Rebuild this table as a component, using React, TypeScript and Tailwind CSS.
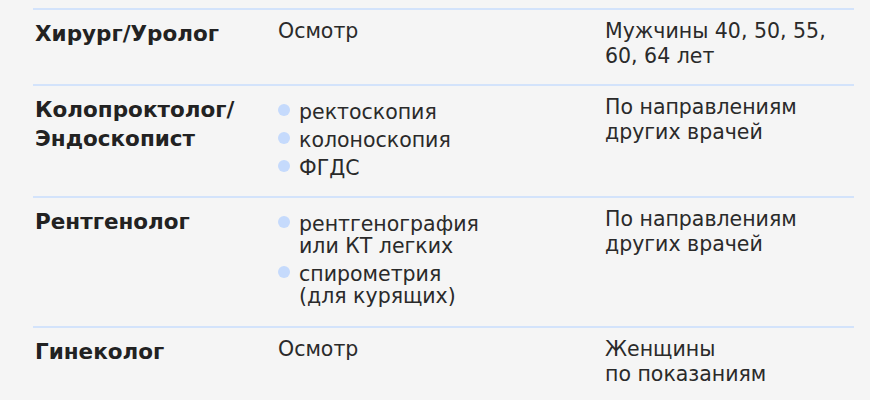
type Row = {
  doctor: string[];
  exams: string[][] | string;
  who: string[];
  pad: string;
};

const rows: Row[] = [
  { doctor: ['Хирург/Уролог'], exams: 'Осмотр', who: ['Мужчины 40, 50, 55,', '60, 64 лет'], pad: 'pb-[15px]' },
  {
    doctor: ['Колопроктолог/', 'Эндоскопист'],
    exams: [['ректоскопия'], ['колоноскопия'], ['ФГДС']],
    who: ['По направлениям', 'других врачей'],
    pad: 'pb-[17px]',
  },
  {
    doctor: ['Рентгенолог'],
    exams: [
      ['рентгенография', 'или КТ легких'],
      ['спирометрия', '(для курящих)'],
    ],
    who: ['По направлениям', 'других врачей'],
    pad: 'pb-[19px]',
  },
  { doctor: ['Гинеколог'], exams: 'Осмотр', who: ['Женщины', 'по показаниям'], pad: 'pb-[15px]' },
];

export default function App() {
  return (
    <div className="min-h-screen bg-[#f5f5f5] pt-[8px] text-[#2a2a2a] font-['DejaVu_Sans',sans-serif]">
      <div className="ml-[33px] w-[821px]">
        {rows.map((r) => (
          <div
            key={r.doctor.join('')}
            className={`grid grid-cols-[245px_327px_1fr] border-t-2 border-[#d3e3fb] pt-[9px] ${r.pad}`}
          >
            <div className="pl-[2px] text-[21.5px] font-bold leading-[29px] text-[#222]">
              {r.doctor.map((d) => (
                <div key={d}>{d}</div>
              ))}
            </div>

            {typeof r.exams === 'string' ? (
              <div className="text-[20.5px] leading-[25px]">{r.exams}</div>
            ) : (
              <ul className="mt-[6px] flex flex-col gap-[6px] text-[20.5px] leading-[22px]">
                {r.exams.map((item) => (
                  <li key={item[0]} className="flex items-start gap-[9px]">
                    <span className="mt-[3px] block h-[12px] w-[12px] flex-none rounded-full bg-[#c5dafc]" />
                    <div>
                      {item.map((line) => (
                        <div key={line}>{line}</div>
                      ))}
                    </div>
                  </li>
                ))}
              </ul>
            )}

            <div className="text-[20.5px] leading-[25px]">
              {r.who.map((w) => (
                <div key={w}>{w}</div>
              ))}
            </div>
          </div>
        ))}
      </div>
    </div>
  );
}
